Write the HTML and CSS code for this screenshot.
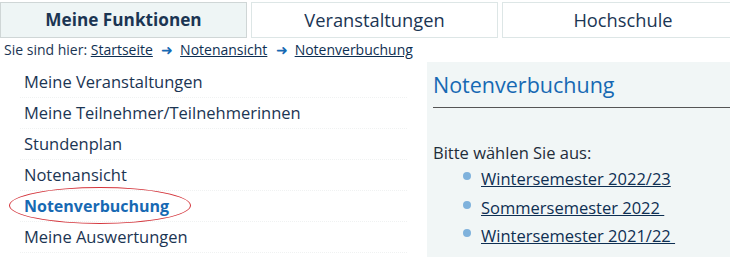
FILE: index.html
```html
<!DOCTYPE html>
<html lang="de">
<head>
    <meta charset="UTF-8">
    <title>Notenverbuchung</title>
    <link rel="stylesheet" href="styles.css">
</head>
<body>
    <nav class="tabs">
        <a class="tab active" href="#">Meine Funktionen</a>
        <a class="tab" href="#">Veranstaltungen</a>
        <a class="tab last" href="#">Hochschule</a>
    </nav>

    <div class="breadcrumb">
        Sie sind hier: <a href="#">Startseite</a>
        <span class="arrow">&#10140;</span> <a href="#">Notenansicht</a>
        <span class="arrow">&#10140;</span> <a href="#">Notenverbuchung</a>
    </div>

    <div class="main">
        <ul class="menu">
            <li><a href="#">Meine Veranstaltungen</a></li>
            <li><a href="#">Meine Teilnehmer/Teilnehmerinnen</a></li>
            <li><a href="#">Stundenplan</a></li>
            <li><a href="#">Notenansicht</a></li>
            <li class="current"><a href="#">Notenverbuchung</a></li>
            <li><a href="#">Meine Auswertungen</a></li>
        </ul>

        <div class="panel">
            <h2>Notenverbuchung</h2>
            <p class="intro">Bitte wählen Sie aus:</p>
            <ul class="terms">
                <li><a href="#">Wintersemester 2022/23</a></li>
                <li><a href="#">Sommersemester 2022&nbsp;</a></li>
                <li><a href="#">Wintersemester 2021/22&nbsp;</a></li>
            </ul>
        </div>
    </div>
</body>
</html>
```

FILE: styles.css
```css
body {
    font-family: "Open Sans", Arial, sans-serif;
    color: #1b3553;
    background: #fff;
    margin: 0;
    overflow: hidden;
    height: 257px;
}

a {
    color: inherit;
}

.tabs {
    display: flex;
    gap: 4px;
    margin-top: 2px;
    width: 740px;
}

.tab {
    flex: 0 0 245px;
    height: 34px;
    line-height: 34px;
    text-align: center;
    font-size: 18.3px;
    color: #1b3553;
    text-decoration: none;
    border: 1px solid #dde6e6;
}

.tab.active {
    background: #eef5f5;
    border-color: #cfd6d6;
    font-weight: bold;
    font-size: 17.2px;
}

.tab.last {
    flex: 0 0 240px;
}

.breadcrumb {
    font-size: 14px;
    color: #1b3553;
    margin: 2px 0 0 4px;
    height: 22px;
}

.breadcrumb a {
    color: #0e2f52;
}

.breadcrumb .arrow {
    color: #1769b3;
    margin: 0 3px 0 5px;
}

.main {
    display: flex;
}

.menu {
    list-style: none;
    margin: 5px 0 0 20px;
    padding: 0;
    width: 387px;
}

.menu li {
    height: 30px;
    line-height: 30px;
    border-bottom: 1px dotted #f0f2f2;
    padding-left: 4px;
    font-size: 16.5px;
}

.menu a {
    text-decoration: none;
    color: #1b3553;
}

.menu li.current {
    position: relative;
}

.menu li.current a {
    color: #1769b3;
    font-weight: bold;
    font-size: 16px;
}

.menu li.current::before {
    content: "";
    position: absolute;
    left: -11px;
    top: -4px;
    width: 180px;
    height: 35px;
    border: 1.3px solid #d4353c;
    border-radius: 50%;
}

.panel {
    flex: 1;
    background: #f1f6f6;
    margin-left: 20px;
    padding: 8px 0 0 5px;
    height: 200px;
}

.panel h2 {
    font-size: 21.5px;
    font-weight: normal;
    color: #1769b3;
    margin: 0 0 0 1px;
    padding-bottom: 8px;
    border-bottom: 1px solid #555;
}

.intro {
    font-size: 16.5px;
    color: #1f2d3a;
    margin: 33px 0 1px 1px;
}

.terms {
    list-style: none;
    margin: 0;
    padding-left: 31px;
}

.terms li {
    position: relative;
    font-size: 16.5px;
    height: 28.5px;
    line-height: 28.5px;
    padding-left: 18px;
}

.terms li::before {
    content: "";
    position: absolute;
    left: 0;
    top: 7px;
    width: 8px;
    height: 8px;
    border-radius: 50%;
    background: #7fb2dc;
}

.terms a {
    color: #0e2f52;
}
```
